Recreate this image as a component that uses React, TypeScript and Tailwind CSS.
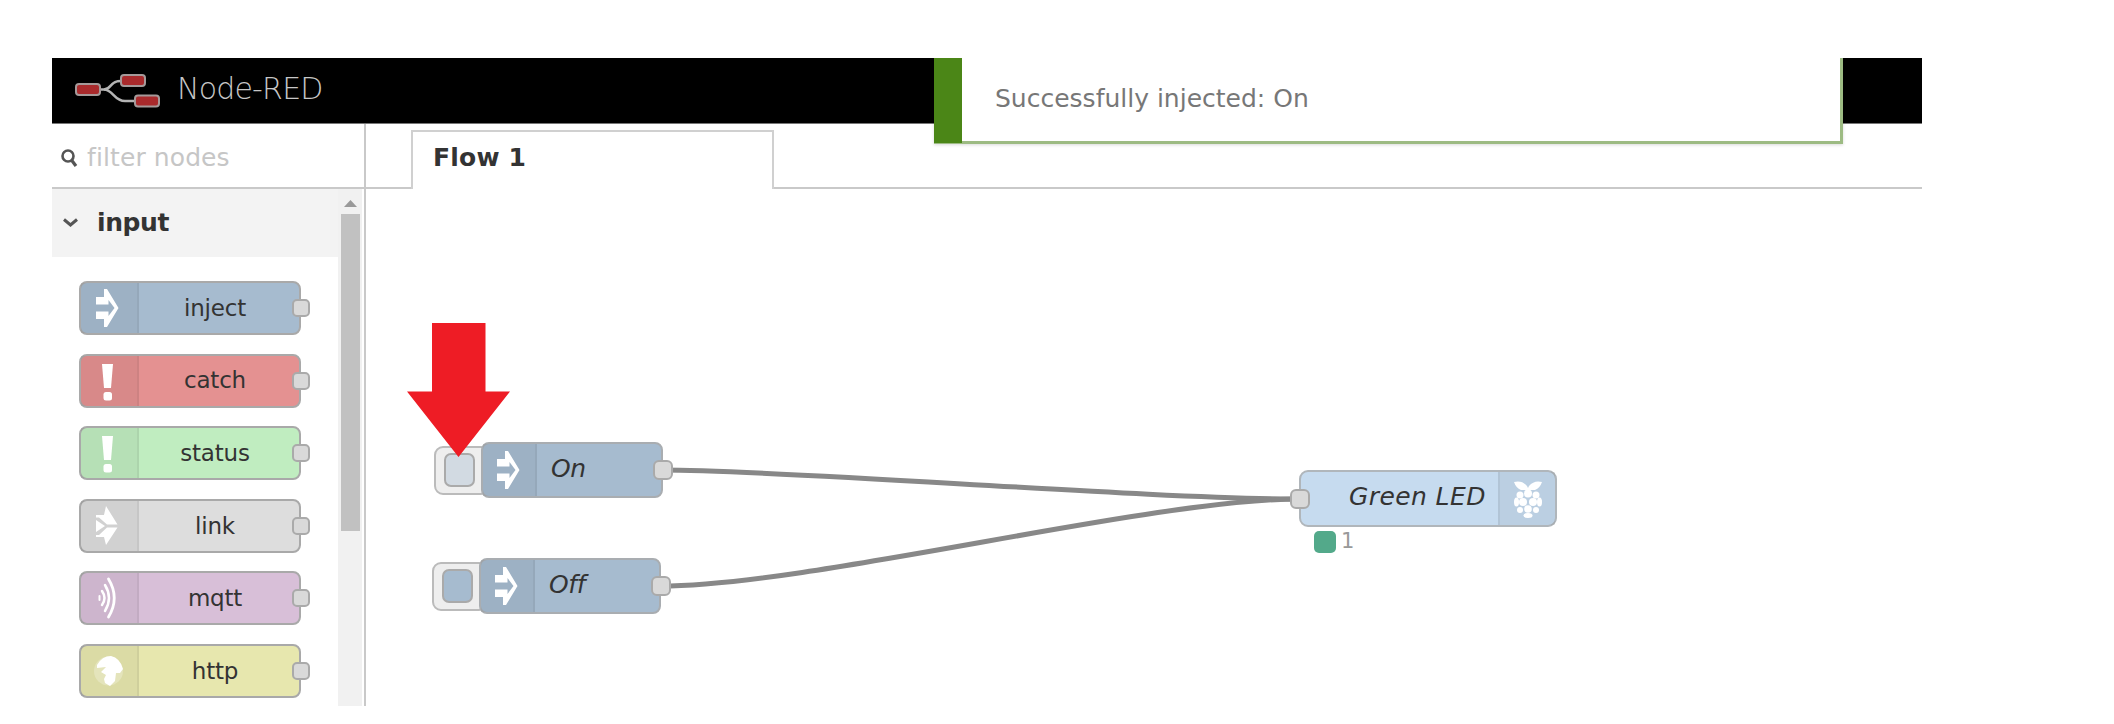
import React from "react";

type IconName = "inject" | "alert" | "link" | "bridge" | "globe" | "rpi";

function NodeIcon({ name }: { name: IconName }) {
  return (
    <svg width="40" height="48" viewBox="0 0 40 48" fill="#fff" className="shrink-0">
      {name === "inject" && (
        <path d="M8 13H16V5H19L30.500 24L19 43H16V35H8V27.500H20.500V32L26.500 24L20.500 16V20.500H8Z" />
      )}
      {name === "alert" && (
        <>
          <path d="M14 7H25L23 31H16Z" />
          <rect x="15.500" y="35" width="8.500" height="8.500" rx="2.500" />
        </>
      )}
      {name === "link" && (
        <path d="M8 13H16L18 4L29.500 22.500H19L11 15.500H8ZM8 18L17 24L8 30ZM8 33H11L19 25.500H29.500L18 43L16 35H8Z" />
      )}
      {name === "bridge" && (
        <g fill="none" stroke="#fff" strokeLinecap="round">
          <path d="M20.500 5Q32 24 20.500 43" strokeWidth="2.800" />
          <path d="M17 11Q25 24 17 37" strokeWidth="2.500" />
          <path d="M14 17Q19 24 14 31" strokeWidth="2.500" />
          <path d="M11.500 22V26" strokeWidth="2" />
        </g>
      )}
      {name === "globe" && (
        <>
          <circle cx="20.500" cy="24" r="14.500" fillOpacity="0.25" />
          <path d="M9 18Q14 9 23 9Q32 11 35 22L32 26L28 26L27 34L22 39L17 36L16 32L18 28L13 25L18 20L9 21Z" />
        </>
      )}
      {name === "rpi" && (
        <>
          <path d="M6 7Q14 5 19 11L20 13L21 11Q26 5 34 7Q32 13 27 15H13Q8 13 6 7Z" />
          <circle cx="20" cy="18.500" r="4" />
          <circle cx="12" cy="20" r="3.500" />
          <circle cx="28" cy="20" r="3.500" />
          <ellipse cx="8.500" cy="27" rx="2.500" ry="4.500" />
          <ellipse cx="31.500" cy="27" rx="2.500" ry="4.500" />
          <circle cx="15" cy="27" r="4" />
          <circle cx="25" cy="27" r="4" />
          <circle cx="20" cy="34" r="3.800" />
          <circle cx="12" cy="35" r="3" />
          <circle cx="28" cy="35" r="3" />
          <ellipse cx="20" cy="40.500" rx="4.500" ry="2.500" />
        </>
      )}
    </svg>
  );
}

const palette: { label: string; color: string; icon: IconName }[] = [
  { label: "inject", color: "bg-[#a6bbcf]", icon: "inject" },
  { label: "catch", color: "bg-[#e49191]", icon: "alert" },
  { label: "status", color: "bg-[#c0edc0]", icon: "alert" },
  { label: "link", color: "bg-[#dddddd]", icon: "link" },
  { label: "mqtt", color: "bg-[#d8bfd8]", icon: "bridge" },
  { label: "http", color: "bg-[#e7e7ae]", icon: "globe" },
];

function PaletteNode({ label, color, icon }: { label: string; color: string; icon: IconName }) {
  return (
    <div className={`relative flex h-[54px] w-[222px] rounded-[8px] border-2 border-[#a9a9a9] ${color}`}>
      <div className="flex w-[58px] items-center justify-center border-r-2 border-black/5 bg-black/5 pr-0.5">
        <NodeIcon name={icon} />
      </div>
      <div className="flex flex-1 items-center justify-center pr-[8px] text-[23px] tracking-[-0.2px]">{label}</div>
      <span className="absolute -right-[11px] top-[16px] size-[18px] rounded-[5px] border-2 border-[#aaa] bg-[#d9d9d9]" />
    </div>
  );
}

function InjectNode({ label, place, button }: { label: string; place: string; button: string }) {
  return (
    <div className={`absolute flex items-center ${place}`}>
      <div className="flex h-[49px] w-[56px] items-center rounded-[9px] border-2 border-[#bbb] bg-[#eeeeee] pl-[8px]">
        <span className={`h-[34px] w-[31px] rounded-[7px] border-2 border-[#aaa] ${button}`} />
      </div>
      <div className="relative -ml-[9px] flex h-[56px] w-[182px] rounded-[8px] border-2 border-[#a9adb1] bg-[#a6bbcf]">
        <div className="flex w-[54px] items-center border-r-2 border-black/5 bg-black/5 pl-[6px]">
          <NodeIcon name="inject" />
        </div>
        <div className="flex items-center pb-[3px] pl-[14px] text-[25px] italic tracking-[-0.4px]">{label}</div>
        <span className="absolute -right-[12px] top-[16px] size-[20px] rounded-[6px] border-2 border-[#aaa] bg-[#d9d9d9]" />
      </div>
    </div>
  );
}

export default function App() {
  return (
    <div className="h-[724px] w-[2114px] overflow-hidden bg-white pl-[52px] pt-[58px] font-['DejaVu_Sans',sans-serif] text-[#333]">
      <div className="relative flex h-[648px] w-[1870px] flex-col overflow-hidden">
        <header className="flex h-[66px] shrink-0 items-center border-b border-[#777] bg-black pl-[23px]">
          <svg width="86" height="36" viewBox="0 0 86 36" className="shrink-0">
            <g fill="none" stroke="#b4b4b4" strokeWidth="2.500">
              <path d="M25 16.500H29C37 16.500 34 8 46 8" />
              <path d="M29 16.500C38 16.500 39 28 50 28H60" />
            </g>
            <g fill="#a92a2c" stroke="#a59a9a" strokeWidth="2">
              <rect x="1" y="11" width="24" height="11" rx="3" />
              <rect x="46" y="2" width="24" height="11" rx="3" />
              <rect x="60" y="22.500" width="24" height="11" rx="3" />
            </g>
          </svg>
          <span className="ml-[16px] pb-[4px] text-[30px] font-extralight tracking-[-0.8px] text-[#c7c7c7]">Node-RED</span>
        </header>

        <div className="flex min-h-0 flex-1">
          <aside className="flex w-[314px] shrink-0 flex-col border-r-2 border-[#c9c9c9]">
            <div className="flex h-[65px] shrink-0 items-center border-b-2 border-[#c9c9c9] pl-[9px]">
              <svg width="17" height="20" viewBox="0 0 17 20" fill="none" stroke="#555" className="mt-[4px]">
                <circle cx="7" cy="8" r="5.500" strokeWidth="2.600" />
                <path d="M10.500 12L15 18" strokeWidth="3.200" />
              </svg>
              <span className="ml-[9px] mt-[5px] text-[25px] tracking-[0.1px] text-[#c6c6c6]">filter nodes</span>
            </div>
            <div className="flex min-h-0 flex-1">
              <div className="flex w-[286px] shrink-0 flex-col">
                <div className="flex h-[68px] shrink-0 items-center bg-[#f3f3f3] pl-[10px]">
                  <svg width="17" height="10" viewBox="0 0 17 10" fill="none" stroke="#555" strokeWidth="3">
                    <path d="M2 1.500L8.500 7L15 1.500" />
                  </svg>
                  <span className="ml-[18px] text-[25px] font-bold tracking-[-0.4px]">input</span>
                </div>
                <div className="flex flex-col gap-[18.600px] pl-[27px] pt-[24px]">
                  {palette.map((n) => (
                    <PaletteNode key={n.label} {...n} />
                  ))}
                </div>
              </div>
              <div className="flex w-[24px] flex-col items-center bg-[#f1f1f1] pt-[11px]">
                <svg width="13" height="7" viewBox="0 0 13 7" fill="#999">
                  <path d="M6.500 0L13 7H0Z" />
                </svg>
                <div className="mt-[7px] h-[317px] w-[19px] bg-[#c1c1c1]" />
              </div>
            </div>
          </aside>

          <main className="flex flex-1 flex-col">
            <div className="flex h-[65px] shrink-0 items-end">
              <div className="w-[45px] border-b-2 border-[#c9c9c9]" />
              <div className="flex h-[59px] w-[363px] items-center border-x-2 border-t-2 border-[#d0d0d0] pb-[6px] pl-[20px] text-[25px] font-bold tracking-[0.2px]">
                Flow 1
              </div>
              <div className="flex-1 border-b-2 border-[#c9c9c9]" />
            </div>
            <div className="relative flex-1">
              <svg width="1556" height="517" viewBox="366 189 1556 517" fill="none" stroke="#888" strokeWidth="5" className="absolute left-0 top-0">
                <path d="M662 470C790 470 1150 499 1300 499" />
                <path d="M660 586C810 586 1150 499 1300 499" />
              </svg>
              <InjectNode label="On" place="left-[68px] top-[253px]" button="bg-[#d2dae2]" />
              <InjectNode label="Off" place="left-[66px] top-[369px]" button="bg-[#a6bbcf]" />
              <div className="absolute left-[933px] top-[281px] flex h-[57px] w-[258px] rounded-[9px] border-2 border-[#b0b6bb] bg-[#c6dbef]">
                <div className="flex flex-1 items-center whitespace-nowrap pb-[3px] pl-[48px] text-[25px] italic tracking-[0.4px]">Green LED</div>
                <div className="flex w-[57px] items-center justify-center border-l-2 border-black/5 bg-black/5">
                  <NodeIcon name="rpi" />
                </div>
                <span className="absolute -left-[11px] top-[17px] size-[20px] rounded-[6px] border-2 border-[#aaa] bg-[#d9d9d9]" />
              </div>
              <div className="absolute left-[948px] top-[342px] flex h-[22px] items-center gap-[5px]">
                <span className="size-[22px] rounded-[5px] bg-[#53a98a]" />
                <span className="text-[21px] text-[#999]">1</span>
              </div>
              <svg width="104" height="135" viewBox="0 0 104 135" fill="#ee1c25" className="absolute left-[41px] top-[134px]">
                <path d="M25 0H78.500V68.500H103L51.500 134L0 68.500H25Z" />
              </svg>
            </div>
          </main>
        </div>

        <div className="absolute left-[882px] top-0 flex h-[86px] w-[909px] border-b-[3px] border-r-[3px] border-[#9dbb83] bg-white shadow-[0_1px_3px_rgba(0,0,0,0.15)]">
          <div className="h-[85px] w-[28px] shrink-0 bg-[#4b8617]" />
          <span className="ml-[33px] mt-[22px] text-[25px] text-[#777]">Successfully injected: On</span>
        </div>
      </div>
    </div>
  );
}
